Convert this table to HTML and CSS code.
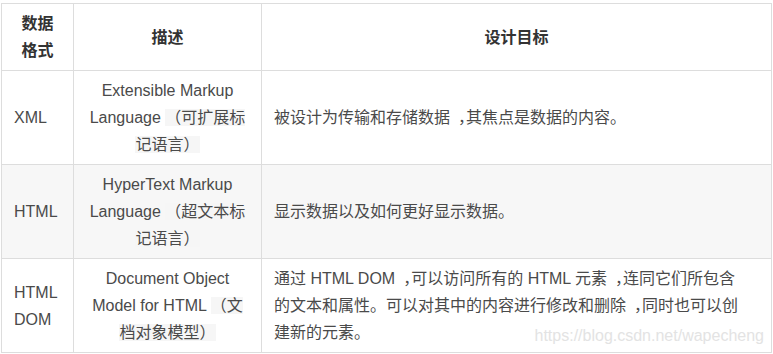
FILE: index.html
```html
<!DOCTYPE html>
<html lang="zh-CN">
<head>
<meta charset="utf-8">
<title>数据格式</title>
<link rel="stylesheet" href="styles.css">
</head>
<body>
<div class="page">
  <table class="fmt">
    <colgroup>
      <col class="col-fmt">
      <col class="col-desc">
      <col class="col-goal">
    </colgroup>
    <thead>
      <tr>
        <th>数据格式</th>
        <th>描述</th>
        <th>设计目标</th>
      </tr>
    </thead>
    <tbody>
      <tr>
        <td class="name">XML</td>
        <td class="desc">Extensible Markup Language <span class="cn">（可扩展标记语言）</span></td>
        <td class="goal">被设计为传输和存储数据<span class="cm">，</span>其焦点是数据的内容。</td>
      </tr>
      <tr class="alt">
        <td class="name">HTML</td>
        <td class="desc">HyperText Markup Language <span class="cn">（超文本标记语言）</span></td>
        <td class="goal">显示数据以及如何更好显示数据。</td>
      </tr>
      <tr>
        <td class="name">HTML DOM</td>
        <td class="desc">Document Object Model for HTML <span class="cn">（文档对象模型）</span></td>
        <td class="goal">通过 HTML DOM<span class="cm">，</span>可以访问所有的 HTML 元素<span class="cm">，</span>连同它们所包含的文本和属性。可以对其中的内容进行修改和删除<span class="cm">，</span>同时也可以创建新的元素。</td>
      </tr>
    </tbody>
  </table>
  <div class="watermark">https://blog.csdn.net/wapecheng</div>
</div>
</body>
</html>
```

FILE: styles.css
```css
html, body {
  margin: 0;
  padding: 0;
  background: #ffffff;
}

body {
  font-family: "Liberation Sans", "Noto Sans CJK SC", sans-serif;
  font-size: 16px;
  color: #4a4a4a;
}

.page {
  position: relative;
  padding: 3px 0 0 1px;
  width: 772px;
  height: 351px;
  box-sizing: content-box;
}

.fmt {
  border-collapse: collapse;
  table-layout: fixed;
  width: 771px;
}

.col-fmt { width: 72px; }
.col-desc { width: 188px; }

.fmt th,
.fmt td {
  border: 1px solid #dddddd;
  padding: 6px 12px;
  line-height: 27px;
  vertical-align: middle;
}

.fmt th {
  font-weight: bold;
  color: #333333;
  text-align: center;
}

.fmt td.name { text-align: left; }
.fmt td.desc { text-align: center; }
.fmt td.goal {
  text-align: left;
  padding-right: 26px;
}

.fmt tr.alt td { background: #f7f7f7; }

.cn { background: #f6f6f6; }

.cm {
  padding-left: 8px;
  margin-right: -8px;
}

.watermark {
  position: absolute;
  right: 9px;
  top: 327px;
  font-size: 16px;
  line-height: 18px;
  color: #e3e3e3;
  white-space: nowrap;
}
```
